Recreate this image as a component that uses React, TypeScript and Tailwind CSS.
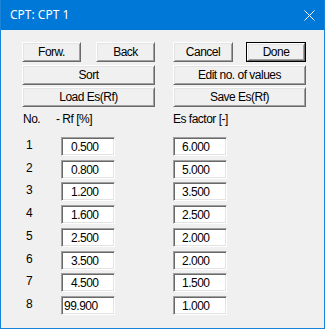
import React from "react";

const rows = [
  { n: "1", a: "0.500", b: "6.000", mt: "" },
  { n: "2", a: "0.800", b: "5.000", mt: "mt-[4px]" },
  { n: "3", a: "1.200", b: "3.500", mt: "mt-[3px]" },
  { n: "4", a: "1.600", b: "2.500", mt: "mt-[4px]" },
  { n: "5", a: "2.500", b: "2.000", mt: "mt-[4px]" },
  { n: "6", a: "3.500", b: "2.000", mt: "mt-[4px]" },
  { n: "7", a: "4.500", b: "1.500", mt: "mt-[3px]" },
  { n: "8", a: "99.900", b: "1.000", mt: "mt-[4px]" },
];

const btn =
  "h-[20px] flex items-center justify-center bg-[#f0f0f0] border border-t-white border-l-white border-r-[#696969] border-b-[#696969] shadow-[inset_1px_1px_0_#e3e3e3,inset_-1px_-1px_0_#a0a0a0] text-black";

function Btn({ label, w }: { label: string; w: string }) {
  return <div className={`${btn} ${w}`}>{label}</div>;
}

function Field({ v, pad }: { v: string; pad: string }) {
  return (
    <div
      className={`h-[19px] w-[54px] bg-white flex items-center border border-t-[#a0a0a0] border-l-[#a0a0a0] border-r-white border-b-white shadow-[inset_1px_1px_0_#696969,inset_-1px_-1px_0_#e3e3e3] ${pad}`}
    >
      {v}
    </div>
  );
}

export default function App() {
  return (
    <div
      className="w-[325px] h-[329px] flex flex-col bg-[#0078d7] border border-[#1883d7] border-t-0"
      style={{ fontFamily: "'Liberation Sans', Arial, sans-serif" }}
    >
      <div className="h-[30px] shrink-0 flex items-center justify-between pl-[9px] pr-[9px] text-white">
        <span className="text-[12px]" style={{ fontFamily: "'Noto Sans', 'Open Sans', sans-serif" }}>
          CPT: CPT 1
        </span>
        <svg width="11" height="11" viewBox="0 0 11 11">
          <path d="M0.5 0.5 L10.5 10.5 M10.5 0.5 L0.5 10.5" stroke="white" strokeWidth="1" />
        </svg>
      </div>
      <div className="flex-1 bg-[#f0f0f0] pl-[21px] pt-[12px] text-[12px] tracking-[-0.5px] text-black leading-none">
        <div className="flex gap-[18px]">
          <div className="flex flex-col w-[133px]">
            <div className="flex justify-between">
              <Btn label="Forw." w="w-[59px]" />
              <Btn label="Back" w="w-[59px]" />
            </div>
            <div className="mt-[3px]">
              <Btn label="Sort" w="w-full" />
            </div>
            <div className="mt-[2px]">
              <Btn label="Load Es(Rf)" w="w-full" />
            </div>
          </div>
          <div className="flex flex-col w-[133px]">
            <div className="flex justify-between">
              <Btn label="Cancel" w="w-[60px]" />
              <div className="h-[20px] w-[60px] border border-[#000000] flex">
                <div className={`${btn} flex-1 h-auto`}>Done</div>
              </div>
            </div>
            <div className="mt-[3px]">
              <Btn label="Edit no. of values" w="w-full" />
            </div>
            <div className="mt-[2px]">
              <Btn label="Save Es(Rf)" w="w-full" />
            </div>
          </div>
        </div>
        <div className="flex h-[13px] mt-[5px] items-center">
          <span className="w-[34px] pl-[1px]">No.</span>
          <span className="w-[117px]">- Rf [%]</span>
          <span>Es factor [-]</span>
        </div>
        <div className="flex flex-col mt-[12px]">
          {rows.map((r) => (
            <div key={r.n} className={`flex items-center h-[19px] ${r.mt}`}>
              <span className="w-[39px] pl-[4px] -mt-[3px]">{r.n}</span>
              <Field v={r.a} pad={r.a.length > 5 ? "pl-[2px]" : "pl-[9px]"} />
              <div className="w-[58px]" />
              <Field v={r.b} pad="pl-[8px]" />
            </div>
          ))}
        </div>
      </div>
    </div>
  );
}
